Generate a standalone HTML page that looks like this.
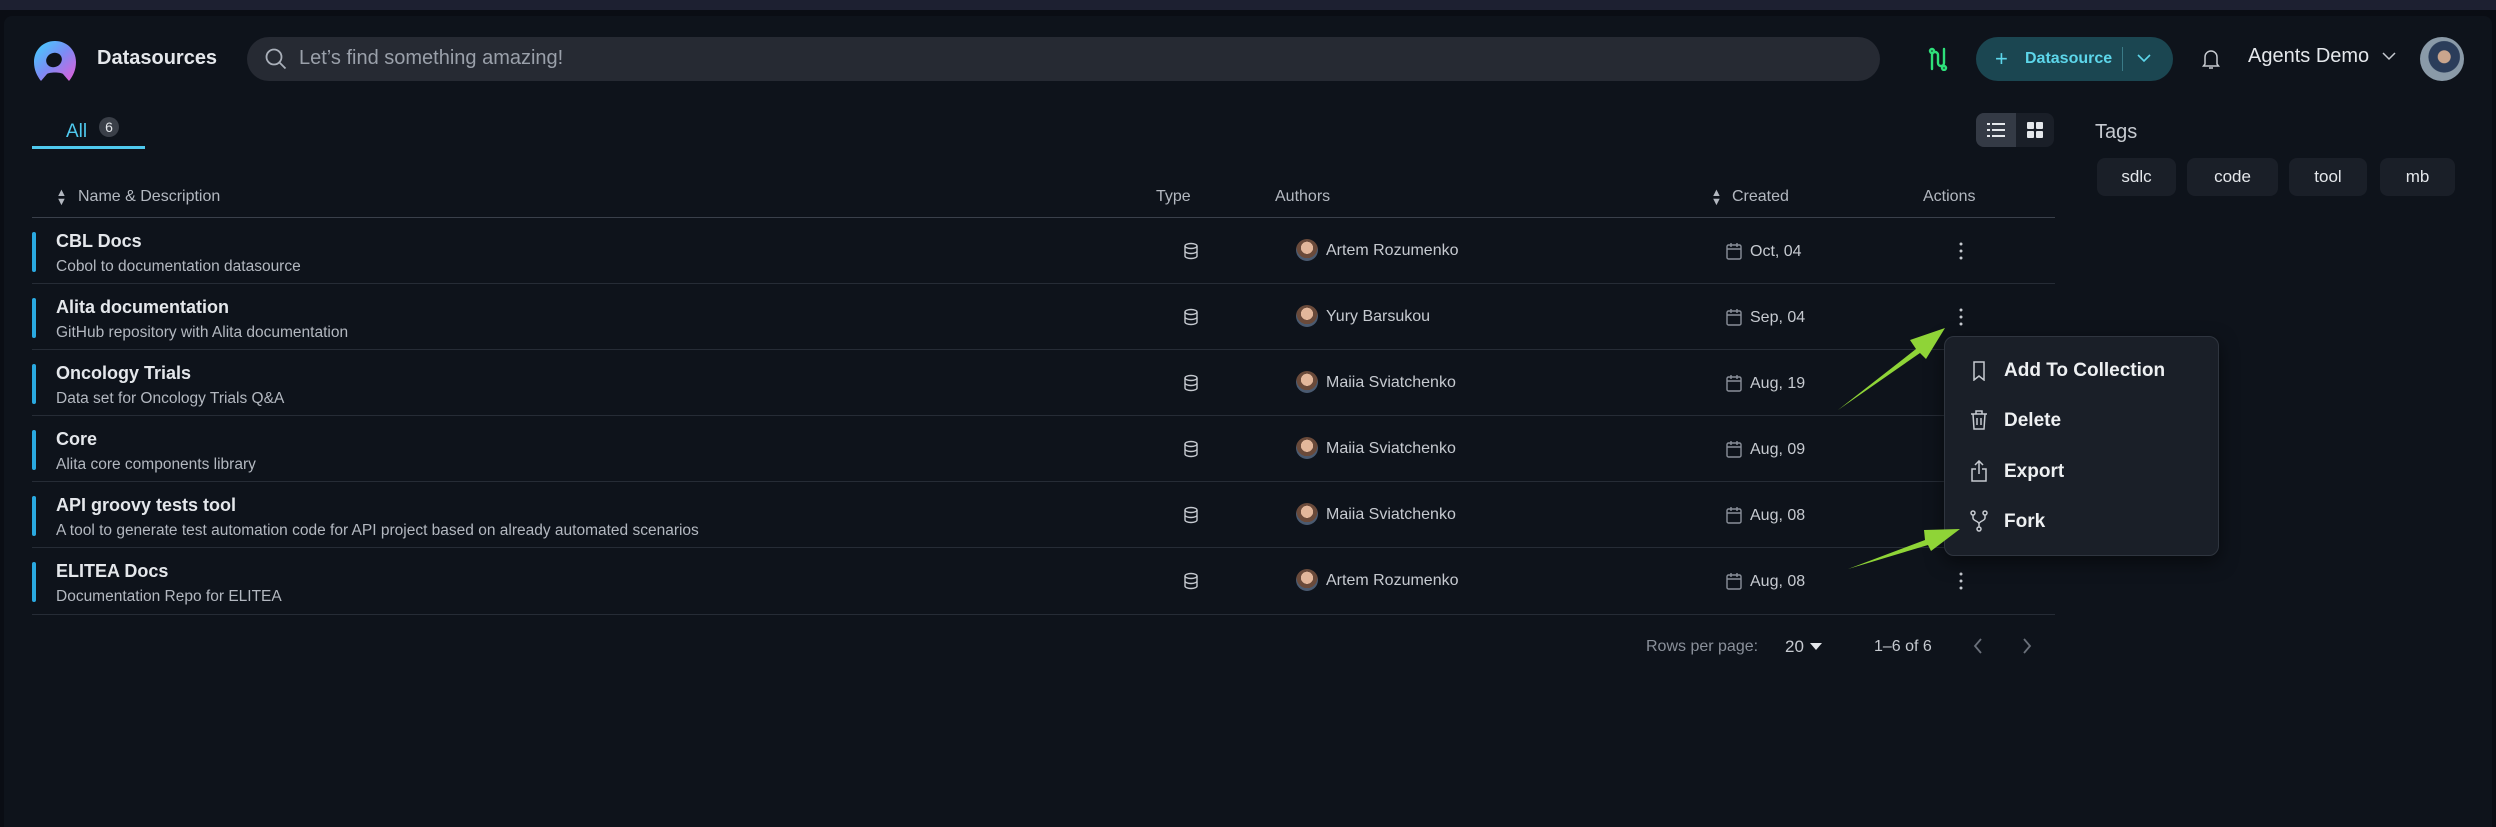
<!DOCTYPE html>
<html><head><meta charset="utf-8"><style>
*{box-sizing:border-box;margin:0;padding:0}
body{width:2496px;height:827px;background:#0a0d14;font-family:"Liberation Sans",sans-serif;color:#e4e7eb;position:relative;overflow:hidden}
.top{position:absolute;left:0;top:0;width:2496px;height:10px;background:#1d2031}
.main{position:absolute;left:4px;top:16px;width:2488px;height:811px;background:#0e131b;border-radius:8px 8px 0 0}
.a{position:absolute;white-space:nowrap}
.search{position:absolute;left:247px;top:37px;width:1633px;height:44px;border-radius:22px;background:#262a33}
.th{font-size:16px;color:#b3b8c0;top:188px}
.line{position:absolute;left:32px;width:2023px;height:1px;background:#262c36}
.title{font-size:18px;font-weight:bold;color:#e4e7eb}
.desc{font-size:15.5px;color:#b3b8c0}
.bar{position:absolute;left:32px;width:4px;height:40px;background:#2aa9e0;border-radius:2px}
.av{position:absolute;width:22px;height:22px;border-radius:50%;background:radial-gradient(circle at 50% 40%,#e3b79b 0 35%,#6a4a3a 36% 60%,#4a5a70 61%)}
.txt{font-size:16px;color:#c6cad0}
.tag{position:absolute;top:158px;height:38px;border-radius:8px;background:#1a1f28;font-size:17px;color:#e4e7eb;text-align:center;line-height:38px}
.mi{font-size:19px;font-weight:bold;color:#eef0f2}
</style></head><body>
<div class="top"></div>
<div class="main"></div>
<svg class="a" style="left:32px;top:40px" width="46" height="42" viewBox="0 0 46 42"><defs><linearGradient id="g" x1="0" y1="0" x2="1" y2="1"><stop offset="0" stop-color="#3fd4ff"/><stop offset="0.5" stop-color="#7b8cf5"/><stop offset="1" stop-color="#e65bd6"/></linearGradient></defs><path d="M23 1C11 1 2 10 2 22c0 8 3 14 7 19l6-7c2-2 14-2 16 0l6 7c4-5 7-11 7-19C44 10 35 1 23 1z" fill="url(#g)"/><ellipse cx="22" cy="20" rx="8" ry="7" fill="#0e131b" transform="rotate(-25 22 20)"/></svg>
<div class="a" style="left:97px;top:47px;font-size:20px;font-weight:bold">Datasources</div>
<div class="search"></div>
<svg class="a" style="left:264px;top:47px" width="24" height="24" viewBox="0 0 24 24" fill="none" stroke="#aab0ba" stroke-width="1.8"><circle cx="10" cy="10" r="7.5"/><path d="M15.5 15.5l6 6"/></svg>
<div class="a" style="left:299px;top:47px;font-size:20px;color:#9aa0aa">Let’s find something amazing!</div>
<svg class="a" style="left:1926px;top:47px" width="22" height="24" viewBox="0 0 22 24" fill="none" stroke="#2ee07a" stroke-width="2.4" stroke-linecap="round"><path d="M6 22V8a3 3 0 0 1 6 0v8a3 3 0 0 0 6 0V2"/><circle cx="6" cy="4" r="2"/><circle cx="18" cy="21" r="2"/></svg>
<div class="a" style="left:1976px;top:37px;width:197px;height:44px;border-radius:22px;background:#1b4651"></div>
<div class="a" style="left:1995px;top:46px;font-size:22px;color:#5dd6ea">+</div>
<div class="a" style="left:2025px;top:50px;font-size:16px;color:#5dd6ea;font-weight:bold">Datasource</div>
<div class="a" style="left:2122px;top:47px;width:1px;height:24px;background:#3a7a86"></div>
<svg class="a" style="left:2136px;top:52px" width="16" height="12" viewBox="0 0 16 12" fill="none" stroke="#5dd6ea" stroke-width="1.6"><path d="M2 3l6 6 6-6"/></svg>
<svg class="a" style="left:2202px;top:48px" width="18" height="22" viewBox="0 0 18 22" fill="none" stroke="#c6cad0" stroke-width="1.5"><path d="M3 16V9a6 6 0 0 1 12 0v7l1.5 2h-15z"/><path d="M7 20h4"/></svg>
<div class="a" style="left:2248px;top:45px;font-size:20px">Agents Demo</div>
<svg class="a" style="left:2381px;top:50px" width="16" height="12" viewBox="0 0 16 12" fill="none" stroke="#c6cad0" stroke-width="1.5"><path d="M2 3l6 6 6-6"/></svg>
<div class="a" style="left:2420px;top:37px;width:44px;height:44px;border-radius:50%;background:radial-gradient(circle at 55% 45%,#c9a58d 0 18%,#2b3d5a 20% 45%,#8a9aa8 47%)"></div>
<div class="a" style="left:66px;top:121px;font-size:19px;color:#4fc9ee">All</div>
<div class="a" style="left:99px;top:117px;width:20px;height:20px;border-radius:50%;background:#3a3f48;font-size:14px;text-align:center;line-height:20px;color:#e4e7eb">6</div>
<div class="a" style="left:32px;top:146px;width:113px;height:3px;background:#4fc9ee"></div>
<div class="a" style="left:1976px;top:113px;width:78px;height:34px;border-radius:8px;background:#1a1f28"></div>
<div class="a" style="left:1976px;top:113px;width:40px;height:34px;border-radius:8px 0 0 8px;background:#343a45"></div>
<svg class="a" style="left:1987px;top:122px" width="18" height="16" viewBox="0 0 18 16" fill="#e4e7eb"><rect x="0" y="1" width="3" height="2"/><rect x="5" y="1" width="13" height="2"/><rect x="0" y="7" width="3" height="2"/><rect x="5" y="7" width="13" height="2"/><rect x="0" y="13" width="3" height="2"/><rect x="5" y="13" width="13" height="2"/></svg>
<svg class="a" style="left:2027px;top:122px" width="16" height="16" viewBox="0 0 16 16" fill="#e4e7eb"><rect x="0" y="0" width="7" height="7" rx="1"/><rect x="9" y="0" width="7" height="7" rx="1"/><rect x="0" y="9" width="7" height="7" rx="1"/><rect x="9" y="9" width="7" height="7" rx="1"/></svg>
<div class="a" style="left:2095px;top:121px;font-size:20px;color:#c6cad0">Tags</div>
<div class="tag" style="left:2097px;width:79px">sdlc</div>
<div class="tag" style="left:2187px;width:91px">code</div>
<div class="tag" style="left:2289px;width:78px">tool</div>
<div class="tag" style="left:2380px;width:75px">mb</div>
<div class="a th" style="left:56px;font-size:11px;line-height:9px;top:189px">▲<br>▼</div>
<div class="a th" style="left:78px">Name &amp; Description</div>
<div class="a th" style="left:1156px">Type</div>
<div class="a th" style="left:1275px">Authors</div>
<div class="a th" style="left:1711px;font-size:11px;line-height:9px;top:189px">▲<br>▼</div>
<div class="a th" style="left:1732px">Created</div>
<div class="a th" style="left:1923px">Actions</div>
<div class="line" style="top:217px;background:#3a404b"></div>

<div class="bar" style="top:232px"></div><div class="a title" style="left:56px;top:231px">CBL Docs</div><div class="a desc" style="left:56px;top:258px">Cobol to documentation datasource</div>
<div class="bar" style="top:298px"></div><div class="a title" style="left:56px;top:297px">Alita documentation</div><div class="a desc" style="left:56px;top:324px">GitHub repository with Alita documentation</div>
<div class="bar" style="top:364px"></div><div class="a title" style="left:56px;top:363px">Oncology Trials</div><div class="a desc" style="left:56px;top:390px">Data set for Oncology Trials Q&amp;A</div>
<div class="bar" style="top:430px"></div><div class="a title" style="left:56px;top:429px">Core</div><div class="a desc" style="left:56px;top:456px">Alita core components library</div>
<div class="bar" style="top:496px"></div><div class="a title" style="left:56px;top:495px">API groovy tests tool</div><div class="a desc" style="left:56px;top:522px">A tool to generate test automation code for API project based on already automated scenarios</div>
<div class="bar" style="top:562px"></div><div class="a title" style="left:56px;top:561px">ELITEA Docs</div><div class="a desc" style="left:56px;top:588px">Documentation Repo for ELITEA</div>

<div class="line" style="top:283px"></div><div class="line" style="top:349px"></div><div class="line" style="top:415px"></div><div class="line" style="top:481px"></div><div class="line" style="top:547px"></div><div class="line" style="top:614px"></div>

<svg width="0" height="0" style="position:absolute"><defs>
<symbol id="db" viewBox="0 0 16 18"><g fill="none" stroke="#c6cad0" stroke-width="1.4"><ellipse cx="8" cy="4" rx="6" ry="2.5"/><path d="M2 4v10c0 1.4 2.7 2.5 6 2.5s6-1.1 6-2.5V4M2 9c0 1.4 2.7 2.5 6 2.5S14 10.4 14 9"/></g></symbol>
<symbol id="cal" viewBox="0 0 16 18"><g fill="none" stroke="#8a909a" stroke-width="1.4"><rect x="1" y="3" width="14" height="14" rx="1.5"/><path d="M1 7h14M5 1v4M11 1v4"/></g></symbol>
<symbol id="dots" viewBox="0 0 4 18"><g fill="#c6cad0"><circle cx="2" cy="2" r="1.5"/><circle cx="2" cy="9" r="1.5"/><circle cx="2" cy="16" r="1.5"/></g></symbol>
</defs></svg>
<svg class="a" style="left:1183px;top:242px" width="16" height="18"><use href="#db"/></svg>
<svg class="a" style="left:1183px;top:308px" width="16" height="18"><use href="#db"/></svg>
<svg class="a" style="left:1183px;top:374px" width="16" height="18"><use href="#db"/></svg>
<svg class="a" style="left:1183px;top:440px" width="16" height="18"><use href="#db"/></svg>
<svg class="a" style="left:1183px;top:506px" width="16" height="18"><use href="#db"/></svg>
<svg class="a" style="left:1183px;top:572px" width="16" height="18"><use href="#db"/></svg>

<div class="av" style="left:1296px;top:239px"></div><div class="a txt" style="left:1326px;top:242px">Artem Rozumenko</div>
<div class="av" style="left:1296px;top:305px"></div><div class="a txt" style="left:1326px;top:308px">Yury Barsukou</div>
<div class="av" style="left:1296px;top:371px"></div><div class="a txt" style="left:1326px;top:374px">Maiia Sviatchenko</div>
<div class="av" style="left:1296px;top:437px"></div><div class="a txt" style="left:1326px;top:440px">Maiia Sviatchenko</div>
<div class="av" style="left:1296px;top:503px"></div><div class="a txt" style="left:1326px;top:506px">Maiia Sviatchenko</div>
<div class="av" style="left:1296px;top:569px"></div><div class="a txt" style="left:1326px;top:572px">Artem Rozumenko</div>

<svg class="a" style="left:1726px;top:242px" width="16" height="18"><use href="#cal"/></svg><div class="a txt" style="left:1750px;top:243px">Oct, 04</div>
<svg class="a" style="left:1726px;top:308px" width="16" height="18"><use href="#cal"/></svg><div class="a txt" style="left:1750px;top:309px">Sep, 04</div>
<svg class="a" style="left:1726px;top:374px" width="16" height="18"><use href="#cal"/></svg><div class="a txt" style="left:1750px;top:375px">Aug, 19</div>
<svg class="a" style="left:1726px;top:440px" width="16" height="18"><use href="#cal"/></svg><div class="a txt" style="left:1750px;top:441px">Aug, 09</div>
<svg class="a" style="left:1726px;top:506px" width="16" height="18"><use href="#cal"/></svg><div class="a txt" style="left:1750px;top:507px">Aug, 08</div>
<svg class="a" style="left:1726px;top:572px" width="16" height="18"><use href="#cal"/></svg><div class="a txt" style="left:1750px;top:573px">Aug, 08</div>

<svg class="a" style="left:1959px;top:242px" width="4" height="18"><use href="#dots"/></svg>
<svg class="a" style="left:1959px;top:308px" width="4" height="18"><use href="#dots"/></svg>
<svg class="a" style="left:1959px;top:572px" width="4" height="18"><use href="#dots"/></svg>

<div class="a" style="left:1944px;top:336px;width:275px;height:220px;border-radius:10px;background:#1a1f28;border:1px solid #2f353f;box-shadow:0 6px 18px rgba(0,0,0,.5)"></div>
<svg class="a" style="left:1972px;top:361px" width="14" height="20" viewBox="0 0 14 20" fill="none" stroke="#c6cad0" stroke-width="1.5"><path d="M2 1h10v18l-5-4-5 4z"/></svg>
<div class="a mi" style="left:2004px;top:360px">Add To Collection</div>
<svg class="a" style="left:1970px;top:410px" width="18" height="20" viewBox="0 0 18 20" fill="none" stroke="#c6cad0" stroke-width="1.5"><path d="M1 4h16M6 4V1h6v3M3 4l1 15h10l1-15M7 8v7M11 8v7"/></svg>
<div class="a mi" style="left:2004px;top:410px">Delete</div>
<svg class="a" style="left:1970px;top:460px" width="18" height="22" viewBox="0 0 18 22" fill="none" stroke="#c6cad0" stroke-width="1.5"><path d="M6 9H2v12h14V9h-4M9 14V1M5 5l4-4 4 4"/></svg>
<div class="a mi" style="left:2004px;top:461px">Export</div>
<svg class="a" style="left:1970px;top:510px" width="18" height="22" viewBox="0 0 18 22" fill="none" stroke="#c6cad0" stroke-width="1.5"><circle cx="3" cy="3" r="2"/><circle cx="15" cy="3" r="2"/><circle cx="9" cy="19" r="2"/><path d="M3 5v3c0 3 6 3 6 6v3M15 5v3c0 3-6 3-6 6"/></svg>
<div class="a mi" style="left:2004px;top:511px">Fork</div>

<svg class="a" style="left:0;top:0" width="2496" height="827"><g fill="#8fd437"><polygon points="1838,410 1916,349 1910,340 1945,328 1926,359 1920,353"/><polygon points="1848,569 1925,540 1924,530 1960,529 1931,551 1928,545"/></g></svg>

<div class="a" style="left:1646px;top:638px;font-size:16px;color:#8a909a">Rows per page:</div>
<div class="a" style="left:1785px;top:637px;font-size:17px;color:#c6cad0">20</div>
<svg class="a" style="left:1810px;top:643px" width="12" height="8"><path d="M0 0h12L6 7z" fill="#e4e7eb"/></svg>
<div class="a" style="left:1874px;top:638px;font-size:16px;color:#c6cad0">1–6 of 6</div>
<svg class="a" style="left:1973px;top:637px" width="10" height="18" fill="none" stroke="#6a707a" stroke-width="1.8"><path d="M8 2L2 9l6 7"/></svg>
<svg class="a" style="left:2022px;top:637px" width="10" height="18" fill="none" stroke="#6a707a" stroke-width="1.8"><path d="M2 2l6 7-6 7"/></svg>
</body></html>
